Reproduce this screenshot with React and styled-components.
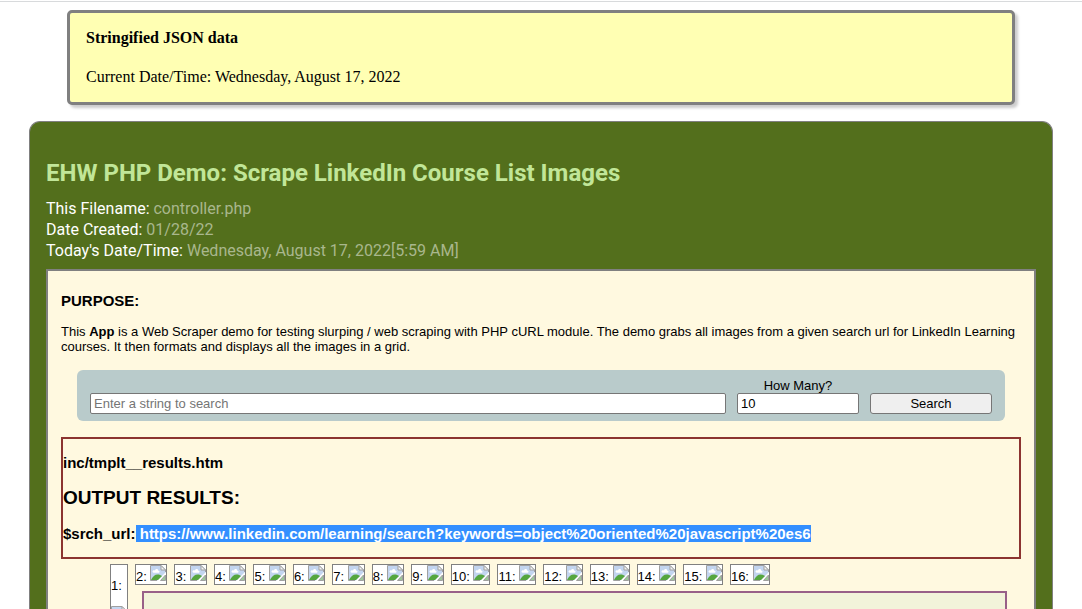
import React from "react";
import styled, { createGlobalStyle } from "styled-components";

const GlobalStyle = createGlobalStyle`
  *, *::before, *::after { box-sizing: border-box; }
  html { overflow: hidden; }
  body {
    margin: 0;
    background: #fff;
    color: #000;
    font-family: "Liberation Sans", Arial, sans-serif;
    font-size: 13px;
    line-height: 15px;
  }
  h1, h2, h3, h4, p, ul { margin: 0; padding: 0; }
`;

const Page = styled.div`
  display: flex;
  flex-direction: column;
  gap: 16px;
  height: 100vh;
  overflow: hidden;
  padding-top: 1px;
`;

const Notice = styled.section`
  margin: 8px 67px 0;
  padding: 16px;
  border: 3px solid #808080;
  border-radius: 5px;
  background: #ffffb3;
  box-shadow: 3px 3px 3px rgba(0, 0, 0, 0.2);
  font-family: "Liberation Serif", "Times New Roman", serif;
  font-size: 16px;
  line-height: 18px;
  flex-shrink: 0;
`;

const NoticeTitle = styled.h3`
  font-size: 16px;
  font-weight: 700;
  margin-bottom: 21px;
`;

const TopRule = styled.hr`
  width: 100%;
  margin: 0 0 -16px;
  border: 0;
  border-top: 1px solid #d8dadc;
  flex-shrink: 0;
`;

const Main = styled.main`
  margin: 0 29px;
  padding: 37px 16px 0;
  border: 1px solid #808080;
  border-bottom: 0;
  border-radius: 11px 11px 0 0;
  background: #536f1c;
  flex-shrink: 0;
`;

const Title = styled.h1`
  font-family: Roboto, sans-serif;
  font-size: 24px;
  line-height: 28px;
  font-weight: 700;
  color: #c1e698;
  margin-bottom: 11px;
`;

const MetaLine = styled.p`
  font-family: Roboto, sans-serif;
  font-size: 16px;
  line-height: 21px;
  color: #fff;
`;

const MetaValue = styled.span`
  color: #a9b78d;
`;

const Panel = styled.section`
  margin-top: 8px;
  padding: 21px 13px 0;
  border: 2px solid #808080;
  border-bottom: 0;
  background: #fff9e0;
`;

const Heading = styled.h2`
  font-size: ${(p) => (p.$large ? 19 : 15)}px;
  line-height: ${(p) => (p.$large ? 22 : 17)}px;
  font-weight: 700;
`;

const Intro = styled.p`
  margin-top: 15px;
`;

const SearchForm = styled.form`
  display: flex;
  align-items: flex-end;
  gap: 11px;
  margin: 16px 16px;
  padding: 8px 13px 7px;
  border-radius: 6px;
  background: #b9cbcb;
`;

const Field = styled.label`
  display: flex;
  flex-direction: column;
  text-align: center;
  width: 122px;
`;

const TextBox = styled.input`
  min-width: 0;
  width: 100%;
  height: 21px;
  margin: 0;
  padding: 1px 3px;
  border: 1px solid #767676;
  border-radius: 2px;
  background: #fff;
  color: #000;
  font: inherit;
  &::placeholder { color: #757575; opacity: 1; }
`;

const SearchBox = styled(TextBox)`
  flex: 1;
`;

const SearchButton = styled.button`
  width: 122px;
  height: 21px;
  padding: 1px 6px;
  border: 1px solid #767676;
  border-radius: 3px;
  background: #efefef;
  color: #000;
  font: inherit;
`;

const Results = styled.section`
  display: flex;
  flex-direction: column;
  gap: 16px;
  padding: 15px 0;
  border: 2px solid #8c3430;
`;

const Highlight = styled.mark`
  background: #338fff;
  color: #fff;
  white-space: pre;
`;

const Gallery = styled.div`
  display: flex;
  align-items: flex-start;
  gap: 7px;
  margin: 5px 14px 0 49px;
`;

const GalleryBody = styled.div`
  flex: 1;
`;

const ThumbList = styled.ul`
  display: flex;
  gap: 7px;
  list-style: none;
`;

const Thumb = styled.li`
  display: flex;
  height: 21px;
  border: 1px solid #808080;
  background: #fff;
  line-height: 23px;
  white-space: pre;
`;

const FirstThumb = styled.div`
  display: flex;
  flex-direction: column;
  width: 18px;
  padding-top: 13px;
  border: 1px solid #808080;
  background: #fff;
  line-height: 16px;
  gap: 12px;
`;

const Detail = styled.div`
  height: 80px;
  margin: 6px 0 0 7px;
  border: 2px solid #986088;
  background: #f2f3da;
`;

const BrokenIcon = styled.svg`
  display: block;
  width: 16px;
  height: 16px;
  flex-shrink: 0;
`;

function BrokenImage() {
  return (
    <BrokenIcon viewBox="0 0 16 16" role="img" aria-label="Missing picture">
      <path d="M.5.5H11L15.5 5V7.5L7.5 15.5H.5Z" fill="#c3d5f0" />
      <path d="M2.5 7C2.2 5.5 4 4.8 5 5.6C5.6 3.4 8.3 3.8 8.3 5.8C9.8 5.6 10 7.5 8.8 7.8H3.5Z" fill="#fff" />
      <path d="M1 15C2.5 11.5 5 9.5 7.5 9.5C9.5 9.5 11 10.2 12 11L8 15Z" fill="#55a63f" />
      <path d="M.5 15.5V.5H11L15.5 5V7M.5 15.5H7" fill="none" stroke="#a0a0a0" />
      <path d="M11 .5V5H15.5Z" fill="#f4f4f4" stroke="#a0a0a0" />
      <path d="M15.5 10V15.5H10.5Z" fill="#9cc998" stroke="#a0a0a0" />
    </BrokenIcon>
  );
}

const thumbs = Array.from({ length: 15 }, (_, i) => i + 2);

export default function App() {
  return (
    <>
      <GlobalStyle />
      <Page>
        <TopRule />
        <Notice>
          <NoticeTitle>Stringified JSON data</NoticeTitle>
          <p>Current Date/Time: Wednesday, August 17, 2022</p>
        </Notice>
        <Main>
          <Title>EHW PHP Demo: Scrape LinkedIn Course List Images</Title>
          <MetaLine>This Filename: <MetaValue>controller.php</MetaValue></MetaLine>
          <MetaLine>Date Created: <MetaValue>01/28/22</MetaValue></MetaLine>
          <MetaLine>Today's Date/Time: <MetaValue>Wednesday, August 17, 2022[5:59 AM]</MetaValue></MetaLine>
          <Panel>
            <Heading>PURPOSE:</Heading>
            <Intro>
              This <b>App</b> is a Web Scraper demo for testing slurping / web scraping with PHP cURL module. The demo
              grabs all images from a given search url for LinkedIn Learning courses. It then formats and displays all
              the images in a grid.
            </Intro>
            <SearchForm onSubmit={(e) => e.preventDefault()}>
              <SearchBox type="text" placeholder="Enter a string to search" aria-label="Enter a string to search" />
              <Field>
                How Many?
                <TextBox type="text" inputMode="numeric" defaultValue="10" />
              </Field>
              <SearchButton type="submit">Search</SearchButton>
            </SearchForm>
            <Results>
              <Heading as="h4">inc/tmplt__results.htm</Heading>
              <Heading $large>OUTPUT RESULTS:</Heading>
              <Heading as="h4">
                $srch_url:
                <Highlight>{" https://www.linkedin.com/learning/search?keywords=object%20oriented%20javascript%20es6"}</Highlight>
              </Heading>
            </Results>
            <Gallery>
              <FirstThumb>1:<BrokenImage /></FirstThumb>
              <GalleryBody>
                <ThumbList>
                  {thumbs.map((n) => (
                    <Thumb key={n}>{`${n}: `}<BrokenImage /></Thumb>
                  ))}
                </ThumbList>
                <Detail />
              </GalleryBody>
            </Gallery>
          </Panel>
        </Main>
      </Page>
    </>
  );
}
